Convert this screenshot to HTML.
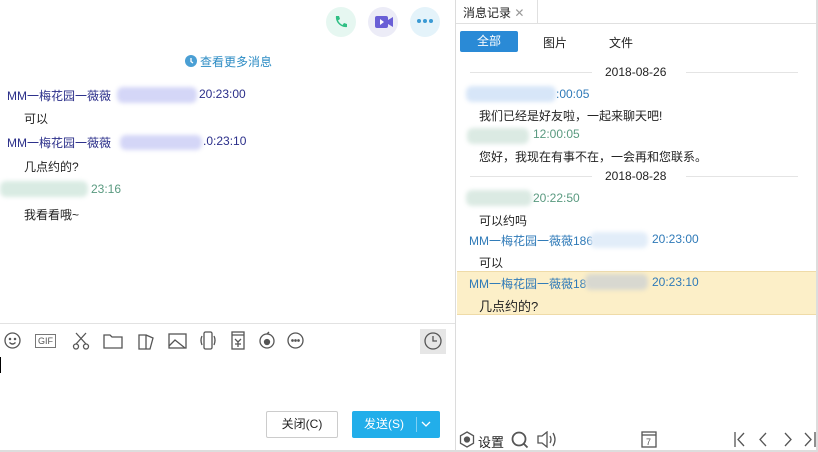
<!DOCTYPE html>
<html><head><meta charset="utf-8"><style>
*{margin:0;padding:0;box-sizing:border-box}
body{width:818px;height:452px;overflow:hidden;background:#fff;font-family:"Liberation Sans","Noto Sans CJK SC",sans-serif;font-size:12px;color:#222;position:relative}
.a{position:absolute;white-space:nowrap}
.blur{position:absolute;border-radius:6px;filter:blur(2px)}
.name{color:#2b2f8a}
.nm2{color:#2f7ab8}
.gr{color:#5a9a80}
svg.i{position:absolute;fill:none;stroke:#555;stroke-width:1.3}
</style></head><body>
<div class="a" style="left:326px;top:7px;width:30px;height:30px;border-radius:50%;background:#e6f7f1"></div>
<svg class="a" style="left:333px;top:14px" width="16" height="16" viewBox="0 0 16 16"><path d="M3 2l3 0 1 3-2 1.5c1 2 2.5 3.5 4.5 4.5L11 9l3 1v3c-6 1-12-5-11-11z" fill="#2fbf84"/></svg>
<div class="a" style="left:368px;top:7px;width:30px;height:30px;border-radius:50%;background:#ececf7"></div>
<svg class="a" style="left:374px;top:14px" width="20" height="16" viewBox="0 0 20 16"><rect x="1" y="2" width="13" height="12" rx="2" fill="#6a5fd6"/><path d="M14 6l5-3v10l-5-3z" fill="#6a5fd6"/><path d="M6 5l4 3-4 3z" fill="#fff"/></svg>
<div class="a" style="left:410px;top:7px;width:30px;height:30px;border-radius:50%;background:#e4f3fa"></div>
<svg class="a" style="left:416px;top:18px" width="18" height="6"><circle cx="3" cy="3" r="2" fill="#3a9ad4"/><circle cx="9" cy="3" r="2" fill="#3a9ad4"/><circle cx="15" cy="3" r="2" fill="#3a9ad4"/></svg>
<svg class="a" style="left:185px;top:55px" width="12" height="12"><circle cx="6" cy="6" r="6" fill="#4a9fd4"/><path d="M6 3v3.5l2 1.5" stroke="#fff" stroke-width="1.3" fill="none"/></svg>
<div class="a" style="left:200px;top:53px;color:#2d8cc4">查看更多消息</div>
<div class="a name" style="left:7px;top:87px">MM一梅花园一薇薇</div>
<div class="blur" style="left:117px;top:87px;width:80px;height:16px;background:#d4d6f7"></div>
<div class="a name" style="left:199px;top:87px">20:23:00</div>
<div class="a" style="left:24px;top:110px">可以</div>
<div class="a name" style="left:7px;top:134px">MM一梅花园一薇薇</div>
<div class="blur" style="left:120px;top:135px;width:82px;height:15px;background:#d4d6f7"></div>
<div class="a name" style="left:203px;top:134px">.0:23:10</div>
<div class="a" style="left:24px;top:158px">几点约的?</div>
<div class="blur" style="left:0;top:181px;width:88px;height:16px;background:#d9ebe3"></div>
<div class="a gr" style="left:91px;top:182px">23:16</div>
<div class="a" style="left:24px;top:206px">我看看哦~</div>
<div class="a" style="left:0;top:323px;width:455px;height:1px;background:#e2e2e2"></div>
<svg class="i" style="left:4px;top:332px" width="17" height="17"><circle cx="8.5" cy="8.5" r="7.5"/><circle cx="6" cy="7" r=".6" fill="#555"/><circle cx="11" cy="7" r=".6" fill="#555"/><path d="M5.5 10.5q3 3 6 0"/></svg>
<div class="a" style="left:35px;top:334px;border:1px solid #777;font-size:9px;color:#555;padding:0 2px;line-height:12px">GIF</div>
<svg class="i" style="left:72px;top:332px" width="18" height="18"><path d="M4 1l10 11M14 1L4 12"/><circle cx="4" cy="14.5" r="2.5"/><circle cx="14" cy="14.5" r="2.5"/></svg>
<svg class="i" style="left:103px;top:333px" width="20" height="16"><path d="M1 2h6l2 2h10v11H1z"/></svg>
<svg class="i" style="left:137px;top:332px" width="18" height="18"><path d="M2 3h7v14H2zM9 3l7 3-3 11H9"/></svg>
<svg class="i" style="left:168px;top:333px" width="19" height="16"><rect x="1" y="1" width="17" height="14"/><path d="M1 13l6-6 10 8"/></svg>
<svg class="i" style="left:199px;top:331px" width="18" height="19"><rect x="5" y="1" width="8" height="17" rx="1.5"/><path d="M3 5q-2 4 0 9M15 5q2 4 0 9"/></svg>
<svg class="i" style="left:231px;top:331px" width="14" height="19"><rect x="1" y="1" width="12" height="17"/><path d="M1 4h12M4 8l3 3 3-3M7 11v5M4 13h6"/></svg>
<svg class="i" style="left:258px;top:331px" width="18" height="18"><circle cx="9" cy="10" r="7"/><circle cx="9" cy="11" r="2.5" fill="#555"/><path d="M9 3l2-2"/></svg>
<svg class="i" style="left:287px;top:332px" width="17" height="17"><circle cx="8.5" cy="8.5" r="7.5"/><circle cx="5.5" cy="8.5" r=".7" fill="#555"/><circle cx="8.5" cy="8.5" r=".7" fill="#555"/><circle cx="11.5" cy="8.5" r=".7" fill="#555"/></svg>
<div class="a" style="left:420px;top:329px;width:26px;height:25px;background:#e6e6e6"></div>
<svg class="i" style="left:424px;top:332px" width="18" height="18"><circle cx="9" cy="9" r="8"/><path d="M9 4v5h4"/></svg>
<div class="a" style="left:0;top:357px;width:1px;height:16px;background:#000"></div>
<div class="a" style="left:266px;top:411px;width:72px;height:27px;border:1px solid #ccc;border-radius:2px;text-align:center;line-height:25px;color:#222">关闭(C)</div>
<div class="a" style="left:352px;top:411px;width:88px;height:27px;background:#22aeea;border-radius:2px;color:#fff;line-height:27px;padding-left:12px">发送(S)</div>
<div class="a" style="left:416px;top:417px;width:1px;height:15px;background:#7fd0f4"></div>
<svg class="a" style="left:421px;top:421px" width="10" height="7"><path d="M1 1l4 4 4-4" stroke="#fff" fill="none" stroke-width="1.3"/></svg>
<div class="a" style="left:455px;top:0;width:1px;height:452px;background:#dcdcdc"></div>
<div class="a" style="left:0;top:450px;width:818px;height:2px;background:#ddd"></div>
<div class="a" style="left:456px;top:0;width:362px;height:24px;border-bottom:1px solid #e0e0e0"></div>
<div class="a" style="left:537px;top:0;width:1px;height:24px;background:#e0e0e0"></div>
<div class="a" style="left:463px;top:4px">消息记录 <span style="color:#999">✕</span></div>
<div class="a" style="left:460px;top:31px;width:58px;height:21px;background:#2a8ad6;border-radius:2px;color:#fff;text-align:center;line-height:21px">全部</div>
<div class="a" style="left:543px;top:34px">图片</div>
<div class="a" style="left:609px;top:34px">文件</div>
<div class="a" style="left:816px;top:0;width:2px;height:452px;background:#ddd"></div>
<div class="a" style="left:470px;top:72px;width:122px;height:1px;background:#e4e4e4"></div>
<div class="a" style="left:605px;top:65px">2018-08-26</div>
<div class="a" style="left:686px;top:72px;width:112px;height:1px;background:#e4e4e4"></div>
<div class="blur" style="left:466px;top:86px;width:90px;height:16px;background:#d7e6f8"></div>
<div class="a nm2" style="left:556px;top:87px">:00:05</div>
<div class="a" style="left:479px;top:107px">我们已经是好友啦，一起来聊天吧!</div>
<div class="blur" style="left:467px;top:128px;width:62px;height:16px;background:#dbeae3"></div>
<div class="a gr" style="left:533px;top:127px">12:00:05</div>
<div class="a" style="left:479px;top:148px">您好，我现在有事不在，一会再和您联系。</div>
<div class="a" style="left:470px;top:176px;width:122px;height:1px;background:#e4e4e4"></div>
<div class="a" style="left:605px;top:169px">2018-08-28</div>
<div class="a" style="left:686px;top:176px;width:112px;height:1px;background:#e4e4e4"></div>
<div class="blur" style="left:466px;top:190px;width:66px;height:16px;background:#dbeae3"></div>
<div class="a gr" style="left:533px;top:191px">20:22:50</div>
<div class="a" style="left:479px;top:212px">可以约吗</div>
<div class="a nm2" style="left:469px;top:232px">MM一梅花园一薇薇186</div>
<div class="blur" style="left:590px;top:232px;width:58px;height:16px;background:#e2edf9"></div>
<div class="a nm2" style="left:652px;top:232px">20:23:00</div>
<div class="a" style="left:479px;top:254px">可以</div>
<div class="a" style="left:457px;top:271px;width:359px;height:44px;background:#fcefc8;border-top:1px solid #efdba8;border-bottom:1px solid #efdba8"></div>
<div class="a nm2" style="left:469px;top:275px">MM一梅花园一薇薇18</div>
<div class="blur" style="left:585px;top:274px;width:63px;height:16px;background:#d8d8d0"></div>
<div class="a nm2" style="left:652px;top:275px">20:23:10</div>
<div class="a" style="left:479px;top:296px;font-size:13px">几点约的?</div>
<svg class="i" style="left:459px;top:431px" width="16" height="17"><path d="M8 1l6.5 3.75v7.5L8 16l-6.5-3.75v-7.5z"/><circle cx="8" cy="8.5" r="2.5" fill="#555"/></svg>
<div class="a" style="left:478px;top:432px;font-size:13px">设置</div>
<svg class="i" style="left:511px;top:431px" width="18" height="18"><circle cx="8" cy="8" r="6.5" stroke-width="1.8"/><path d="M12.5 12.5l4 4" stroke-width="1.8"/></svg>
<svg class="i" style="left:537px;top:431px" width="22" height="17"><path d="M1 5h4l5-4v15l-5-4H1z"/><path d="M13 5q2 3.5 0 7M16 2q4 6.5 0 13"/></svg>
<svg class="i" style="left:641px;top:430px" width="16" height="18"><rect x="1" y="2" width="14" height="15"/><path d="M1 5h14"/><text x="5" y="15" font-size="9" fill="#555" stroke="none" font-family="Liberation Sans">7</text></svg>
<svg class="i" style="left:733px;top:431px" width="84" height="17" stroke="#aaa"><path d="M2 1v15M11 2l-6 6.5 6 6.5M33 2l-6 6.5 6 6.5M52 2l6 6.5-6 6.5M72 2l6 6.5-6 6.5M82 1v15"/></svg>
</body></html>
